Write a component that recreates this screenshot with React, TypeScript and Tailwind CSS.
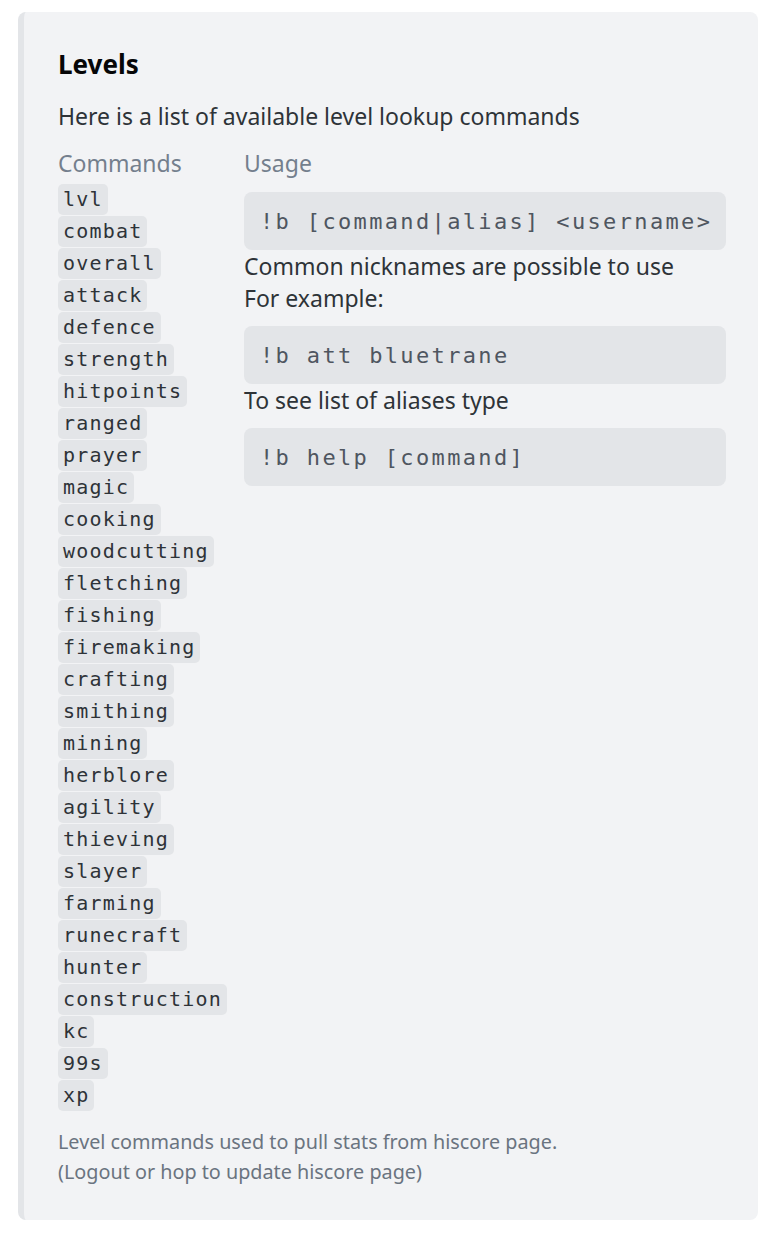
const commands = [
  "lvl", "combat", "overall", "attack", "defence", "strength", "hitpoints",
  "ranged", "prayer", "magic", "cooking", "woodcutting", "fletching", "fishing",
  "firemaking", "crafting", "smithing", "mining", "herblore", "agility",
  "thieving", "slayer", "farming", "runecraft", "hunter", "construction",
  "kc", "99s", "xp",
]

const sans = "font-['Noto_Sans','Lato',sans-serif]"
const mono = "font-['DejaVu_Sans_Mono','Liberation_Mono',monospace]"

function CodeBlock({ children }: { children: string }) {
  return (
    <div className={`${mono} h-[58px] flex items-center pl-[16px] overflow-hidden rounded-[8px] bg-[#e3e5e8] text-[22px] tracking-[2.35px] text-[#4f5660] whitespace-pre`}>
      {children}
    </div>
  )
}

export default function App() {
  return (
    <div className="bg-white min-h-[1244px] pt-[12px] pl-[18px]">
      <div className={`${sans} w-[740px] rounded-[8px] border-l-[6px] border-[#e3e5e8] bg-[#f2f3f5] pl-[34px] pr-[32px] pt-[36px] pb-[33px]`}>
        {/* Title + description */}
        <div className="text-[26px] leading-[32px] font-bold text-[#060607]">Levels</div>
        <div className="mt-[20px] text-[23px] leading-[32px] text-[#2e3338]">
          Here is a list of available level lookup commands
        </div>

        {/* Fields */}
        <div className="mt-[15px] flex">
          <div className="w-[186px] shrink-0">
            <div className="text-[23px] leading-[32px] text-[#747f8d]">Commands</div>
            <div className="mt-[5px] flex flex-col">
              {commands.map((c) => (
                <div key={c} className="h-[32px] flex items-start">
                  <span className={`${mono} inline-block h-[31px] leading-[31px] px-[5px] rounded-[5px] bg-[#e3e5e8] text-[20px] tracking-[1.2px] text-[#2e3338]`}>
                    {c}
                  </span>
                </div>
              ))}
            </div>
          </div>

          <div className="flex-1 min-w-0">
            <div className="text-[23px] leading-[32px] text-[#747f8d]">Usage</div>
            <div className="mt-[13px]">
              <CodeBlock>{"!b [command|alias] <username>"}</CodeBlock>
            </div>
            <div className="text-[23px] leading-[32px] text-[#2e3338]">
              <div>Common nicknames are possible to use</div>
              <div>For example:</div>
            </div>
            <div className="mt-[12px]">
              <CodeBlock>!b att bluetrane</CodeBlock>
            </div>
            <div className="text-[23px] leading-[32px] text-[#2e3338]">To see list of aliases type</div>
            <div className="mt-[12px]">
              <CodeBlock>!b help [command]</CodeBlock>
            </div>
          </div>
        </div>

        {/* Footer */}
        <div className="mt-[15px] text-[19.8px] leading-[30px] text-[#6a7480]">
          <div>Level commands used to pull stats from hiscore page.</div>
          <div>(Logout or hop to update hiscore page)</div>
        </div>
      </div>
    </div>
  )
}
